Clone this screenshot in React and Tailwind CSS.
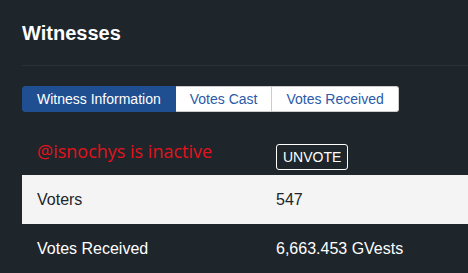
const tabs = ["Witness Information", "Votes Cast", "Votes Received"];

const rows = [
  { label: "Voters", value: "547", light: true },
  { label: "Votes Received", value: "6,663.453 GVests", light: false },
];

export default function App() {
  return (
    <div className="w-[468px] h-[273px] overflow-hidden bg-[#1e252b] font-['Liberation_Sans',Arial,sans-serif]">
      <div className="pl-[22px] pt-[19px]">
        <h1 className="text-[20px] leading-[28px] font-bold text-white">Witnesses</h1>
        <div className="mt-[18px] h-px bg-[#27323a]"></div>

        <div className="mt-[20px] flex">
          {tabs.map((t, i) => (
            <div
              key={t}
              className={
                i === 0
                  ? "h-[26px] px-[14px] flex items-center text-[14px] text-white bg-[#1f4f91] border border-[#1f4f91] rounded-l-[3px]"
                  : i === tabs.length - 1
                  ? "h-[26px] px-[14px] flex items-center text-[14px] text-[#2a5aa8] bg-white border border-l-0 border-[#cccccc] rounded-r-[3px]"
                  : "h-[26px] px-[14px] flex items-center text-[14px] text-[#2a5aa8] bg-white border border-l-0 border-[#cccccc]"
              }
            >
              {t}
            </div>
          ))}
        </div>

        <div className="mt-[18px] flex h-[45px]">
          <div className="w-[239px] pl-[15px] pt-[8px]">
            <span className="text-[18px] leading-[26px] text-[#e3131d] font-['Open_Sans',sans-serif]">
              @isnochys is inactive
            </span>
          </div>
          <div className="pl-[15px] pt-[14px]">
            <button className="h-[26px] px-[6px] border border-white rounded-[3px] text-white text-[14px] leading-none">
              UNVOTE
            </button>
          </div>
        </div>

        {rows.map((r) => (
          <div
            key={r.label}
            className={
              r.light
                ? "flex items-center h-[49px] bg-[#f4f4f4] text-[#212529] text-[16px]"
                : "flex items-center h-[49px] text-white text-[16px]"
            }
          >
            <div className="w-[239px] pl-[15px]">{r.label}</div>
            <div className="pl-[15px]">{r.value}</div>
          </div>
        ))}
      </div>
    </div>
  );
}
